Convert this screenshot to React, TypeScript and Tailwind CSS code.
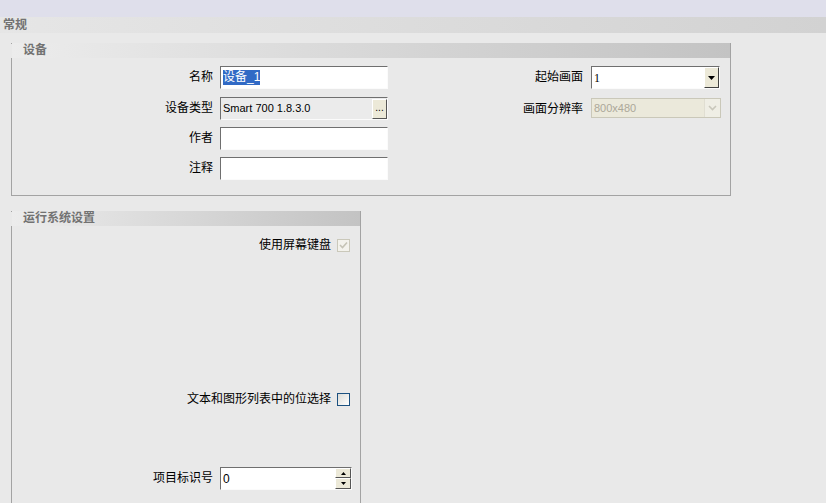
import React from "react";

const inputBase =
  "h-[23px] border-t-[#6f6f6f] border-l-[#6f6f6f] border-r-[#fbfbfb] border-b-[#fbfbfb] border";

function GroupHeader({ title }: { title: string }) {
  return (
    <div className="h-[15px] bg-gradient-to-r from-[#ececec] to-[#c3c3c3] pl-[11px] text-[12px] leading-[15px] font-bold text-[#727272]">
      {title}
    </div>
  );
}

function TextInput({ children, className = "" }: { children?: React.ReactNode; className?: string }) {
  return (
    <div className={`${inputBase} w-[168px] bg-white flex items-center pl-[2px] text-[11px] ${className}`}>
      {children}
    </div>
  );
}

function Label({ text, w }: { text: string; w: string }) {
  return <div className={`${w} text-right text-[12px] text-black leading-[23px]`}>{text}</div>;
}

export default function App() {
  return (
    <div className="w-[826px] h-[503px] overflow-hidden bg-[#e9e9e9] font-['Liberation_Sans','Noto_Sans_CJK_SC',sans-serif] text-black">
      <div className="h-[17px] bg-[#dfdfeb]" />
      <div className="h-[16px] bg-gradient-to-r from-[#e6e6e6] to-[#d2d2d2] pl-[3px] text-[12px] leading-[16px] font-bold text-[#727272]">
        常规
      </div>
      <div className="pt-[10px] pl-[11px]">
        {/* Group 1 */}
        <div className="relative w-[720px] h-[153px] border-r border-b border-[#a3a3a3]">
          <div className="absolute left-0 top-0 w-px h-px bg-[#a3a3a3]" />
          <div className="pl-px">
            <GroupHeader title="设备" />
          </div>
          <div className="h-[137px] border-l border-[#a3a3a3] flex">
            {/* left column */}
            <div className="flex flex-col pt-[8px] gap-[7px]">
              <div className="flex gap-[7px]">
                <Label text="名称" w="w-[201px]" />
                <TextInput>
                  <span className="bg-[#316ac5] text-white text-[12px] leading-[15px]">设备_1</span>
                </TextInput>
              </div>
              <div className="flex gap-[7px] mt-px">
                <Label text="设备类型" w="w-[201px]" />
                <div className={`${inputBase} w-[168px] bg-[#ebebeb] flex items-center justify-between pl-[2px]`}>
                  <span className="text-[11px]">Smart 700 1.8.3.0</span>
                  <div className="w-[15px] h-[20px] bg-[#ece9d8] border border-t-white border-l-white border-r-[#555] border-b-[#555] text-[10px] leading-[16px] text-center">
                    ...
                  </div>
                </div>
              </div>
              <div className="flex gap-[7px]">
                <Label text="作者" w="w-[201px]" />
                <TextInput />
              </div>
              <div className="flex gap-[7px]">
                <Label text="注释" w="w-[201px]" />
                <TextInput />
              </div>
            </div>
            {/* right column */}
            <div className="flex flex-col pt-[8px] gap-[9px]">
              <div className="flex gap-[8px]">
                <Label text="起始画面" w="w-[195px]" />
                <div className={`${inputBase} w-[129px] bg-white flex items-center justify-between pl-[2px]`}>
                  <span className="text-[12px] font-['Liberation_Serif',serif]">1</span>
                  <div className="w-[15px] h-[21px] bg-[#ece9d8] border border-t-white border-l-white border-r-[#404040] border-b-[#404040] flex items-center justify-center">
                    <svg width="7" height="4" viewBox="0 0 7 4">
                      <path d="M0 0h7L3.5 4z" fill="#000" />
                    </svg>
                  </div>
                </div>
              </div>
              <div className="flex gap-[8px]">
                <Label text="画面分辨率" w="w-[195px]" />
                <div className="w-[130px] h-[20px] bg-[#ebe9db] border border-[#cac8b9] flex items-center justify-between pl-[2px]">
                  <span className="text-[11px] text-[#aca899]">800x480</span>
                  <div className="w-[16px] h-[18px] bg-[#efeee5] border-l border-[#e0ded2] flex items-center justify-center">
                    <svg width="9" height="6" viewBox="0 0 9 6">
                      <path d="M1 1l3.5 3.5L8 1" stroke="#c9c7bb" strokeWidth="1.6" fill="none" />
                    </svg>
                  </div>
                </div>
              </div>
            </div>
          </div>
        </div>

        {/* Group 2 */}
        <div className="relative mt-[15px] w-[350px] h-[300px] border-r border-[#a3a3a3]">
          <div className="absolute left-0 top-0 w-px h-px bg-[#a3a3a3]" />
          <div className="pl-px">
            <GroupHeader title="运行系统设置" />
          </div>
          <div className="h-[285px] border-l border-[#a3a3a3] flex flex-col">
            <div className="flex justify-end items-center gap-[6px] pr-[10px] mt-[12px] h-[14px]">
              <span className="text-[12px]">使用屏幕键盘</span>
              <div className="w-[13px] h-[13px] border border-[#cac8ba] bg-[#f3f2ec] flex items-center justify-center">
                <svg width="9" height="8" viewBox="0 0 9 8">
                  <path d="M1 4l2.5 2.5L8 1.5" stroke="#c5c3b5" strokeWidth="1.6" fill="none" />
                </svg>
              </div>
            </div>
            <div className="flex justify-end items-center gap-[6px] pr-[10px] mt-[140px] h-[14px]">
              <span className="text-[12px]">文本和图形列表中的位选择</span>
              <div className="w-[13px] h-[13px] border border-[#1c5180] bg-gradient-to-br from-[#dcdcd7] to-white" />
            </div>
            <div className="flex gap-[7px] mt-[61px]">
              <Label text="项目标识号" w="w-[201px]" />
              <div className={`${inputBase} w-[132px] bg-white flex items-center justify-between pl-[2px]`}>
                <span className="text-[12px]">0</span>
                <div className="flex flex-col w-[16px]">
                  <div className="h-[10px] bg-[#ece9d8] border border-t-white border-l-white border-r-[#555] border-b-[#555] flex items-center justify-center">
                    <svg width="5" height="3" viewBox="0 0 5 3">
                      <path d="M0 3h5L2.5 0z" fill="#000" />
                    </svg>
                  </div>
                  <div className="h-[11px] bg-[#ece9d8] border border-t-white border-l-white border-r-[#555] border-b-[#555] flex items-center justify-center">
                    <svg width="5" height="3" viewBox="0 0 5 3">
                      <path d="M0 0h5L2.5 3z" fill="#000" />
                    </svg>
                  </div>
                </div>
              </div>
            </div>
          </div>
        </div>
      </div>
    </div>
  );
}
